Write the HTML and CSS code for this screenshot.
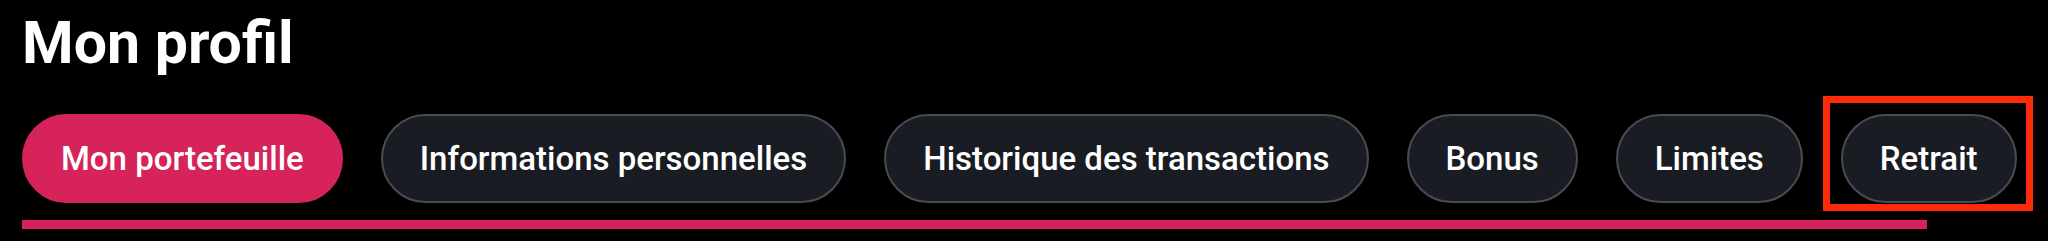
FILE: index.html
```html
<!DOCTYPE html>
<html lang="fr">
<head>
<meta charset="utf-8">
<title>Mon profil</title>
<link rel="stylesheet" href="styles.css">
</head>
<body>
<main class="profile">
  <h1 class="title">Mon profil</h1>
  <nav class="tabs">
    <div class="tab-row">
      <button class="tab tab-active">Mon portefeuille</button>
      <button class="tab">Informations personnelles</button>
      <button class="tab">Historique des transactions</button>
      <button class="tab">Bonus</button>
      <button class="tab">Limites</button>
      <span class="tab-wrap">
        <button class="tab">Retrait</button>
        <span class="highlight"></span>
      </span>
    </div>
    <div class="tab-track"></div>
  </nav>
</main>
</body>
</html>
```
FILE: styles.css
```css
html, body {
  margin: 0;
  padding: 0;
  background: #000;
}
body {
  width: 2048px;
  height: 241px;
  overflow: hidden;
  font-family: Roboto, "Liberation Sans", sans-serif;
  color: #fff;
}
.profile {
  padding: 0 22px;
}
.title {
  margin: 0;
  padding-top: 9px;
  height: 108px;
  box-sizing: border-box;
  font-size: 59px;
  font-weight: 700;
  line-height: 68px;
}
.tab-row {
  display: flex;
  gap: 38px;
  align-items: center;
  height: 89px;
  margin-top: 6px;
}
.tab {
  height: 89px;
  box-sizing: border-box;
  padding: 0 37px;
  border-radius: 45px;
  border: 2px solid #4a4b50;
  background: #1a1c23;
  color: #fff;
  font-family: Roboto, "Liberation Sans", sans-serif;
  font-size: 33px;
  font-weight: 500;
  white-space: nowrap;
  cursor: pointer;
}
.tab-active {
  background: #d6235a;
  border-color: #d6235a;
}
.tab-wrap {
  position: relative;
  display: inline-flex;
}
.highlight {
  position: absolute;
  left: -18px;
  right: -16px;
  top: -18px;
  bottom: -8px;
  border: 7px solid #fe2a0a;
  pointer-events: none;
}
.tab-track {
  margin-top: 17px;
  width: 1905px;
  height: 9px;
  background: #d6235a;
}
```
